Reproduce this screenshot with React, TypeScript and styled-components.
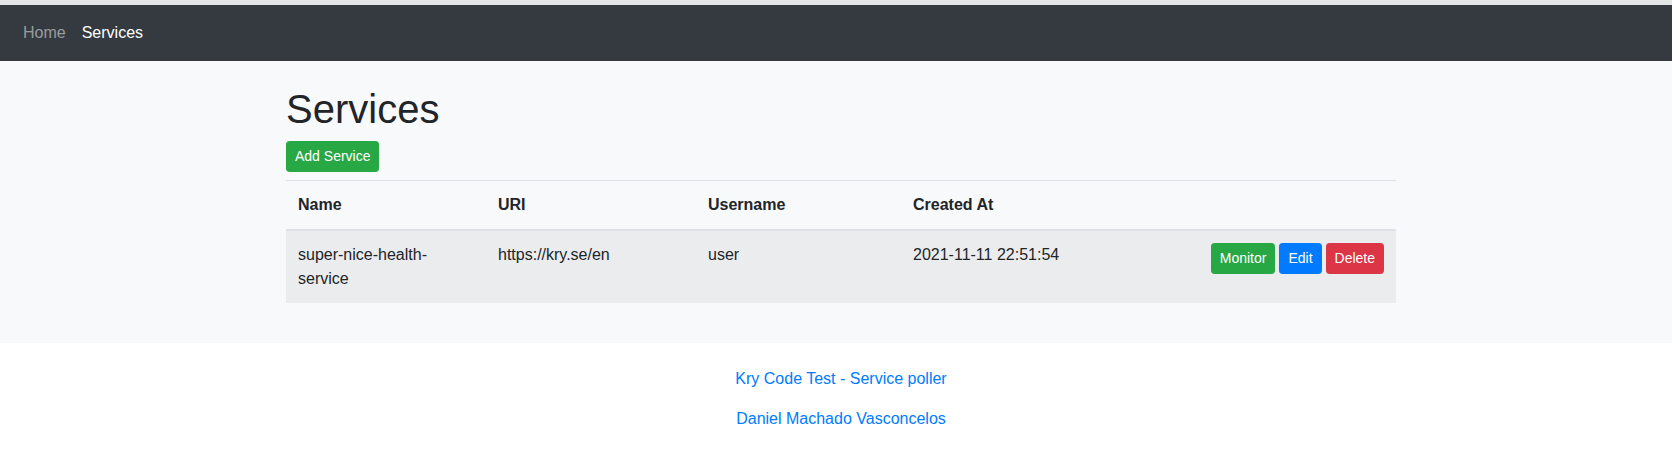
import React from 'react'
import styled, { createGlobalStyle } from 'styled-components'

const GlobalStyle = createGlobalStyle`
  * { box-sizing: border-box; }
  body {
    margin: 0;
    font-family: "Liberation Sans", Arial, sans-serif;
    font-size: 16px;
    line-height: 1.5;
    color: #212529;
    background: #fff;
  }
`

const TopStrip = styled.div`
  height: 5px;
  background: #e4e5e6;
`

const Navbar = styled.nav`
  background: #343a40;
  padding: 8px 16px 8px 15px;
  display: flex;
  align-items: center;
`

const NavLink = styled.a<{ $active?: boolean }>`
  display: block;
  padding: 8px;
  color: ${p => (p.$active ? '#fff' : 'rgba(255, 255, 255, 0.5)')};
  text-decoration: none;
`

const Section = styled.section`
  background: #f8f9fa;
  padding: 24px 0 24px 10px;
`

const Container = styled.div`
  width: 1110px;
  margin: 0 auto;
`

const Title = styled.h1`
  margin: 0 0 8px;
  font-size: 40px;
  font-weight: 500;
  line-height: 1.2;
`

const Button = styled.button<{ $variant: 'success' | 'primary' | 'danger' }>`
  display: inline-block;
  font-family: inherit;
  font-size: 14px;
  line-height: 1.5;
  padding: 4px 8px;
  border-radius: 3.2px;
  color: #fff;
  border: 1px solid
    ${p => ({ success: '#28a745', primary: '#007bff', danger: '#dc3545' })[p.$variant]};
  background: ${p => ({ success: '#28a745', primary: '#007bff', danger: '#dc3545' })[p.$variant]};
  cursor: pointer;
`

const Toolbar = styled.div`
  margin-bottom: 8px;
`

const Table = styled.table`
  width: 100%;
  border-collapse: collapse;
  table-layout: fixed;
  margin-bottom: 16px;
`

const Th = styled.th<{ $w?: number }>`
  width: ${p => (p.$w ? `${p.$w}px` : 'auto')};
  text-align: left;
  padding: 12px;
  border-top: 1px solid #dee2e6;
  border-bottom: 2px solid #dee2e6;
  font-weight: 700;
  vertical-align: bottom;
`

const Row = styled.tr`
  background: rgba(0, 0, 0, 0.05);
`

const Td = styled.td`
  padding: 12px;
  vertical-align: top;
  border-top: 1px solid #dee2e6;
`

const Actions = styled.div`
  display: flex;
  justify-content: flex-end;
  gap: 4px;
`

const Footer = styled.footer`
  padding: 24px 0 0 10px;
  text-align: center;
`

const FooterLine = styled.p`
  margin: 0 0 16px;
`

const FooterLink = styled.a`
  color: #007bff;
  text-decoration: none;
`

export default () => (
  <>
    <GlobalStyle />
    <TopStrip />
    <Navbar>
      <NavLink href="#">Home</NavLink>
      <NavLink href="#" $active>
        Services
      </NavLink>
    </Navbar>

    <Section>
      <Container>
        <Title>Services</Title>
        <Toolbar>
          <Button $variant="success">Add Service</Button>
        </Toolbar>
        <Table>
          <thead>
            <tr>
              <Th $w={200}>Name</Th>
              <Th $w={210}>URI</Th>
              <Th $w={205}>Username</Th>
              <Th $w={250}>Created At</Th>
              <Th />
            </tr>
          </thead>
          <tbody>
            <Row>
              <Td>super-nice-health-service</Td>
              <Td>https://kry.se/en</Td>
              <Td>user</Td>
              <Td>2021-11-11 22:51:54</Td>
              <Td>
                <Actions>
                  <Button $variant="success">Monitor</Button>
                  <Button $variant="primary">Edit</Button>
                  <Button $variant="danger">Delete</Button>
                </Actions>
              </Td>
            </Row>
          </tbody>
        </Table>
      </Container>
    </Section>

    <Footer>
      <FooterLine>
        <FooterLink href="#">Kry Code Test - Service poller</FooterLink>
      </FooterLine>
      <FooterLine>
        <FooterLink href="#">Daniel Machado Vasconcelos</FooterLink>
      </FooterLine>
    </Footer>
  </>
)
